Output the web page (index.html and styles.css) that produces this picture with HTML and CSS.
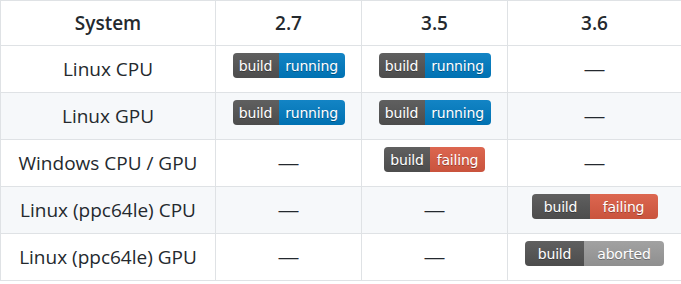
FILE: index.html
```html
<!DOCTYPE html>
<html lang="en">
<head>
<meta charset="utf-8">
<title>Build status</title>
<link rel="stylesheet" href="styles.css">
</head>
<body>
<table class="status">
  <colgroup>
    <col class="c-sys"><col class="c-v"><col class="c-v"><col class="c-last">
  </colgroup>
  <thead>
    <tr><th>System</th><th>2.7</th><th>3.5</th><th>3.6</th></tr>
  </thead>
  <tbody>
    <tr>
      <td>Linux CPU</td>
      <td><span class="badge"><span class="l w46">build</span><span class="r blue w66">running</span></span></td>
      <td><span class="badge"><span class="l w46">build</span><span class="r blue w66">running</span></span></td>
      <td><span class="dash">—</span></td>
    </tr>
    <tr>
      <td>Linux GPU</td>
      <td><span class="badge"><span class="l w46">build</span><span class="r blue w66">running</span></span></td>
      <td><span class="badge"><span class="l w46">build</span><span class="r blue w66">running</span></span></td>
      <td><span class="dash">—</span></td>
    </tr>
    <tr>
      <td>Windows CPU / GPU</td>
      <td><span class="dash">—</span></td>
      <td><span class="badge"><span class="l w46">build</span><span class="r red w55">failing</span></span></td>
      <td><span class="dash">—</span></td>
    </tr>
    <tr>
      <td>Linux (ppc64le) CPU</td>
      <td><span class="dash">—</span></td>
      <td><span class="dash">—</span></td>
      <td><span class="badge"><span class="l w58">build</span><span class="r red w68">failing</span></span></td>
    </tr>
    <tr>
      <td>Linux (ppc64le) GPU</td>
      <td><span class="dash">—</span></td>
      <td><span class="dash">—</span></td>
      <td><span class="badge"><span class="l w59">build</span><span class="r grey w80">aborted</span></span></td>
    </tr>
  </tbody>
</table>
</body>
</html>
```
FILE: styles.css
```css
html, body {
  margin: 0;
  padding: 0;
  background: #ffffff;
}

.status {
  width: 681px;
  table-layout: fixed;
  border-collapse: collapse;
  border-spacing: 0;
  font-family: "Open Sans", "Noto Sans", sans-serif;
  font-size: 19px;
  color: #24292e;
}

.c-sys { width: 215px; }
.c-v { width: 146px; }
.c-last { width: 174px; }

.status th,
.status td {
  border: 1px solid #dfe2e5;
  padding: 7px 0;
  text-align: center;
  white-space: nowrap;
}

.status th {
  font-weight: 600;
  line-height: 30px;
}

.status td {
  line-height: 32px;
}

.status tbody tr:nth-child(2n) {
  background: #f6f8fa;
}

.dash {
  font-family: "Liberation Sans", Arial, sans-serif;
  font-size: 20px;
}

.badge {
  display: inline-flex;
  vertical-align: top;
  height: 25px;
  border-radius: 4px;
  overflow: hidden;
  font-family: "DejaVu Sans", Verdana, sans-serif;
  font-size: 14px;
  letter-spacing: -0.2px;
  line-height: 26px;
  color: #ffffff;
  text-shadow: 0 1px 0 rgba(1, 1, 1, 0.3);
}

.badge .l,
.badge .r {
  display: block;
  text-align: center;
  background-image: linear-gradient(rgba(187, 187, 187, 0.1), rgba(0, 0, 0, 0.1));
}

.badge .l { background-color: #555555; }
.badge .blue { background-color: #007ec6; }
.badge .red { background-color: #e05d44; }
.badge .grey { background-color: #9f9f9f; }

.w46 { width: 46px; }
.w55 { width: 55px; }
.w58 { width: 58px; }
.w59 { width: 59px; }
.w66 { width: 66px; }
.w68 { width: 68px; }
.w80 { width: 80px; }
```
